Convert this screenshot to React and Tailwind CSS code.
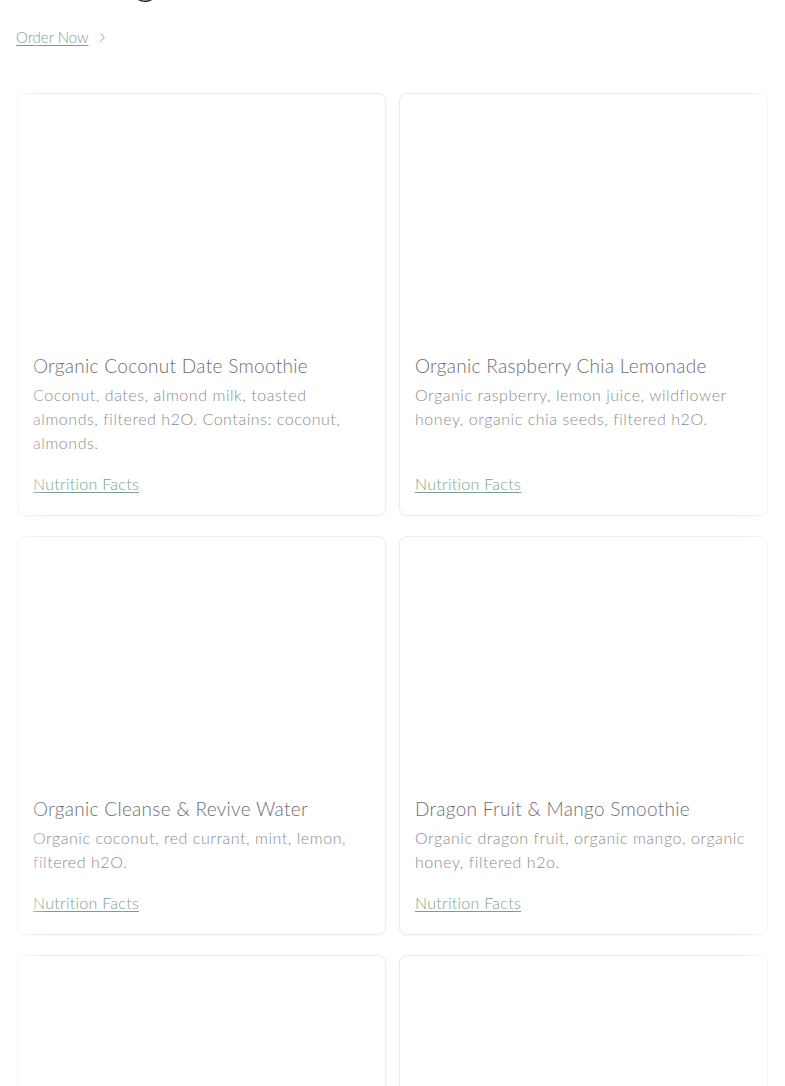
import React from "react";
import { ChevronRight } from "lucide-react";

const drinks = [
  {
    name: "Organic Coconut Date Smoothie",
    desc: "Coconut, dates, almond milk, toasted almonds, filtered h2O. Contains: coconut, almonds.",
  },
  {
    name: "Organic Raspberry Chia Lemonade",
    desc: "Organic raspberry, lemon juice, wildflower honey, organic chia seeds, filtered h2O.",
  },
  {
    name: "Organic Cleanse & Revive Water",
    desc: "Organic coconut, red currant, mint, lemon, filtered h2O.",
  },
  {
    name: "Dragon Fruit & Mango Smoothie",
    desc: "Organic dragon fruit, organic mango, organic honey, filtered h2o.",
  },
  {
    name: "Organic Green Detox Juice",
    desc: "Kale, spinach, cucumber, celery, green apple, lemon, ginger.",
  },
  {
    name: "Cold Brew Oat Latte",
    desc: "Cold brew coffee, oat milk, organic maple syrup.",
  },
];

function DrinkCard({ drink }) {
  return (
    <div className="flex flex-col rounded-lg border border-[#ebebeb] bg-white shadow-[0_1px_3px_rgba(0,0,0,0.04)]">
      <div className="h-[246px] w-full rounded-t-lg bg-white" />
      <div className="flex flex-1 flex-col px-[15px] pt-[16px] pb-[19px] font-light">
        <h3 className="text-[19px] leading-[20px] tracking-[0.3px] text-[#6e6e6e]">{drink.name}</h3>
        <p className="mt-[7px] text-[16px] leading-[24px] tracking-[0.55px] text-[#8c8c8c]">{drink.desc}</p>
        <a
          href="#"
          className="mt-auto pt-[17px] text-[16px] leading-[24px] tracking-[0.27px] text-[#7c9f8f] underline underline-offset-2"
        >
          Nutrition Facts
        </a>
      </div>
    </div>
  );
}

export default function App() {
  return (
    <div className="min-h-screen overflow-hidden bg-white font-['Lato','Liberation_Sans',sans-serif]">
      <div className="px-4">
        <h2 className="-mt-[40px] text-[40px] leading-[40px] font-light text-[#333]">Beverages</h2>
        <a
          href="#"
          className="mt-[27px] flex items-center gap-[6px] text-[15px] leading-[20px] font-light text-[#7c9f8f]"
        >
          <span className="underline underline-offset-2">Order Now</span>
          <ChevronRight size={15} strokeWidth={1.5} className="text-[#999]" />
        </a>
      </div>

      <div className="relative mt-[46px] px-[17px]">
        <div className="grid grid-cols-2 gap-x-[13px] gap-y-[20px]">
          {drinks.map((d) => (
            <DrinkCard key={d.name} drink={d} />
          ))}
        </div>
        <div className="pointer-events-none absolute inset-y-0 left-0 w-[48px] bg-linear-to-r from-white/60 via-white/50 to-transparent" />
        <div className="pointer-events-none absolute inset-y-0 right-0 w-[48px] bg-linear-to-l from-white/60 via-white/50 to-transparent" />
      </div>
    </div>
  );
}
